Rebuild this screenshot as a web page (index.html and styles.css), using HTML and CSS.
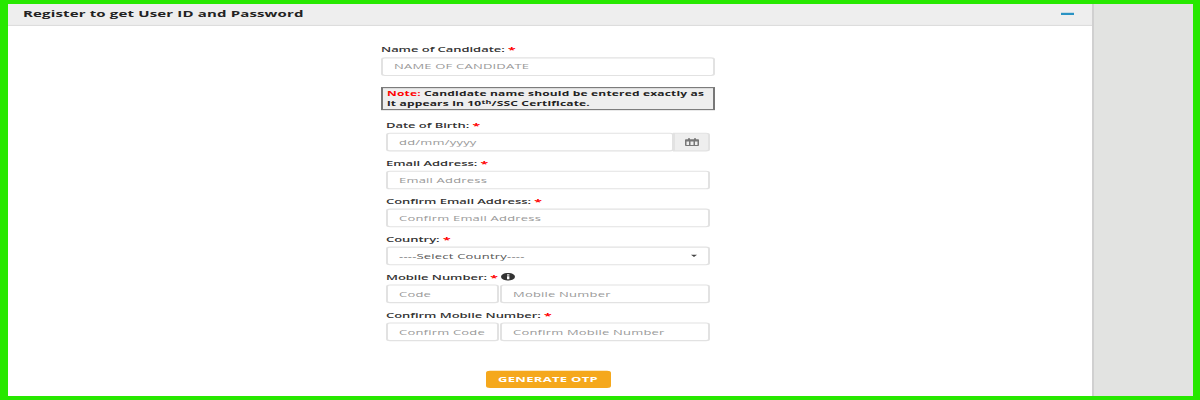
FILE: index.html
```html
<!DOCTYPE html>
<html lang="en">
<head>
    <meta charset="UTF-8">
    <meta name="viewport" content="width=device-width, initial-scale=1.0">
    <title>Register to get User ID and Password</title>
    <link rel="stylesheet" href="styles.css">
</head>
<body>
    <div class="frame">
        <div class="page">
            <div class="card">
                <div class="card-head">
                    <h1>Register to get User ID and Password</h1>
                    <span class="collapse-bar"></span>
                </div>
                <form class="reg-form">
                    <div class="form-group wide">
                        <label>Name of Candidate: <span class="req">*</span></label>
                        <input type="text" placeholder="NAME OF CANDIDATE">
                    </div>
                    <div class="note"><span class="note-tag">Note:</span> Candidate name should be entered exactly as<br>it appears in 10<sup>th</sup>/SSC Certificate.</div>
                    <div class="form-group">
                        <label>Date of Birth: <span class="req">*</span></label>
                        <div class="input-row">
                            <input type="text" placeholder="dd/mm/yyyy">
                            <span class="addon">
                                <svg width="14" height="16" viewBox="0 0 14 16"><path fill="#777" d="M1 3h2V1h2v2h4V1h2v2h2a1 1 0 0 1 1 1v10a1 1 0 0 1-1 1H1a1 1 0 0 1-1-1V4a1 1 0 0 1 1-1zm.5 4v6.500h2.500V7zm4 0v6.500h3V7zm4.500 0v6.500h2.500V7z"/></svg>
                            </span>
                        </div>
                    </div>
                    <div class="form-group">
                        <label>Email Address: <span class="req">*</span></label>
                        <input type="text" placeholder="Email Address">
                    </div>
                    <div class="form-group">
                        <label>Confirm Email Address: <span class="req">*</span></label>
                        <input type="text" placeholder="Confirm Email Address">
                    </div>
                    <div class="form-group">
                        <label>Country: <span class="req">*</span></label>
                        <div class="select-box">----Select Country----<span class="caret"></span></div>
                    </div>
                    <div class="form-group">
                        <label>Mobile Number: <span class="req">*</span>
                            <svg class="info" width="14" height="14" viewBox="0 0 14 14"><circle cx="7" cy="7" r="7" fill="#333"/><rect x="6" y="6" width="2.400" height="5.500" fill="#fff"/><rect x="6" y="2.500" width="2.400" height="2.200" fill="#fff"/></svg>
                        </label>
                        <div class="input-row">
                            <input class="code" type="text" placeholder="Code">
                            <input type="text" placeholder="Mobile Number">
                        </div>
                    </div>
                    <div class="form-group">
                        <label>Confirm Mobile Number: <span class="req">*</span></label>
                        <div class="input-row">
                            <input class="code" type="text" placeholder="Confirm Code">
                            <input type="text" placeholder="Confirm Mobile Number">
                        </div>
                    </div>
                    <div class="actions">
                        <button type="button">GENERATE OTP</button>
                    </div>
                </form>
            </div>
            <div class="side"></div>
        </div>
    </div>
</body>
</html>
```
FILE: styles.css
```css
body {
    margin: 0;
    height: 400px;
    padding: 4px 7px 4px 8px;
    box-sizing: border-box;
    background-color: #27e800;
    font-family: "Open Sans", sans-serif;
    color: #333;
    overflow: hidden;
}
.frame {
    height: 392px;
    overflow: hidden;
}
/* the reference is squashed vertically, so the page is too */
.page {
    display: flex;
    height: 713px;
    transform: scaleY(0.55);
    transform-origin: top left;
}
.card {
    width: 1086px;
    background: #fff;
    border-right: 2px solid #d0d0d0;
    box-sizing: border-box;
}
.side {
    flex: 1;
    background-color: #e2e3e1;
}
.card-head {
    display: flex;
    justify-content: space-between;
    align-items: center;
    height: 40px;
    padding: 0 18px 3px 15px;
    background: #eee;
    border-bottom: 2px solid #ddd;
    box-sizing: border-box;
}
.card-head h1 {
    margin: 0;
    font-size: 15px;
    font-weight: 700;
    letter-spacing: 0.15px;
    color: #222;
}
.collapse-bar {
    width: 13px;
    height: 4px;
    background: #2a93c4;
}
.reg-form {
    width: 334px;
    margin-left: 373px;
    padding-top: 33px;
}
.form-group {
    margin: 0 5px 11px;
}
.form-group.wide {
    margin: 0 0 20px;
}
label {
    display: block;
    height: 24px;
    font-size: 13px;
    font-weight: 600;
    line-height: 20px;
    letter-spacing: -0.05px;
    color: #333;
}
.req {
    color: #f00;
    font-size: 14px;
    font-weight: 700;
    line-height: 0;
}
.info {
    vertical-align: -2px;
}
input, .select-box {
    display: block;
    width: 100%;
    height: 34px;
    padding: 0 11px;
    border: 2px solid #e2e2e2;
    border-radius: 4px;
    background: #fff;
    box-sizing: border-box;
    font-family: "Open Sans", sans-serif;
    font-size: 13px;
    letter-spacing: 0.2px;
}
input::placeholder {
    color: #999;
    opacity: 1;
}
.input-row {
    display: flex;
}
.input-row input {
    flex: 1;
    min-width: 0;
}
.input-row .code {
    flex: none;
    width: 113px;
    margin-right: 1px;
}
.addon {
    display: flex;
    align-items: center;
    justify-content: center;
    width: 37px;
    height: 34px;
    margin-left: -1px;
    background: #eee;
    border: 2px solid #e2e2e2;
    border-radius: 0 4px 4px 0;
    box-sizing: border-box;
}
.select-box {
    display: flex;
    align-items: center;
    justify-content: space-between;
    color: #555;
}
.caret {
    border-top: 4px solid #444;
    border-left: 3px solid transparent;
    border-right: 3px solid transparent;
}
.note {
    margin-bottom: 17px;
    height: 42px;
    padding: 2px 4px;
    background: #eee;
    border: 2px solid #777;
    box-sizing: border-box;
    font-size: 12px;
    font-weight: 700;
    line-height: 18px;
    letter-spacing: 0.17px;
    color: #222;
}
.note-tag {
    color: #f00;
}
.note sup {
    font-size: 9px;
    line-height: 0;
}
.actions {
    margin-top: 54px;
    text-align: center;
}
button {
    width: 125px;
    height: 31px;
    padding: 0;
    background-color: #f5a81c;
    color: #fff;
    border: none;
    border-radius: 4px;
    font-family: "Open Sans", sans-serif;
    font-size: 13px;
    font-weight: 700;
    letter-spacing: 0.3px;
}
```
